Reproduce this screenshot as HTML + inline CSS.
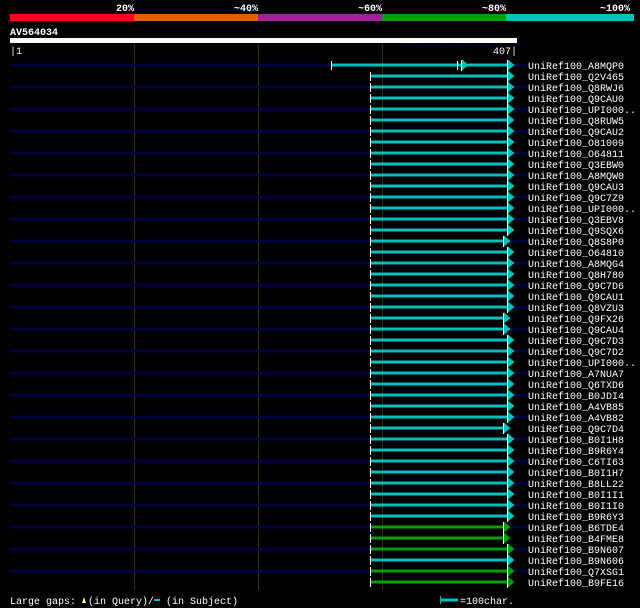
<!DOCTYPE html><html><head><style>html,body{margin:0;padding:0;background:#000;width:640px;height:608px;overflow:hidden}svg{display:block}text{font-family:"Liberation Mono",monospace;font-size:10px;fill:#fff}</style></head><body>
<svg width="640" height="608" viewBox="0 0 640 608" xmlns="http://www.w3.org/2000/svg">
<defs>
<g id="n"><line x1="10" y1="0" x2="528" y2="0" stroke="#000040" stroke-width="3"/></g>
<g id="cf"><line x1="371" y1="0" x2="508" y2="0" stroke="#00c0c0" stroke-width="3"/><line x1="370.5" y1="-4" x2="370.5" y2="5" stroke="#fff"/><polygon points="508,-5.5 514.5,0 508,5.5" fill="#00c0c0"/><line x1="507.5" y1="-5" x2="507.5" y2="6" stroke="#fff"/></g>
<g id="cs"><line x1="371" y1="0" x2="504" y2="0" stroke="#00c0c0" stroke-width="3"/><line x1="370.5" y1="-4" x2="370.5" y2="5" stroke="#fff"/><polygon points="504,-5.5 510.5,0 504,5.5" fill="#00c0c0"/><line x1="503.5" y1="-5" x2="503.5" y2="6" stroke="#fff"/></g>
<g id="gf"><line x1="371" y1="0" x2="508" y2="0" stroke="#00a000" stroke-width="3"/><line x1="370.5" y1="-4" x2="370.5" y2="5" stroke="#fff"/><polygon points="508,-5.5 514.5,0 508,5.5" fill="#00a000"/><line x1="507.5" y1="-5" x2="507.5" y2="6" stroke="#fff"/></g>
<g id="gs"><line x1="371" y1="0" x2="504" y2="0" stroke="#00a000" stroke-width="3"/><line x1="370.5" y1="-4" x2="370.5" y2="5" stroke="#fff"/><polygon points="504,-5.5 510.5,0 504,5.5" fill="#00a000"/><line x1="503.5" y1="-5" x2="503.5" y2="6" stroke="#fff"/></g>
</defs>
<g style="font-weight:bold"><text x="134" y="11" text-anchor="end">20%</text><text x="258" y="11" text-anchor="end">~40%</text><text x="382" y="11" text-anchor="end">~60%</text><text x="506" y="11" text-anchor="end">~80%</text><text x="630" y="11" text-anchor="end">~100%</text></g>
<rect x="10" y="14" width="124" height="7" fill="#ff0022"/><rect x="134" y="14" width="124" height="7" fill="#e06000"/><rect x="258" y="14" width="124" height="7" fill="#a020a0"/><rect x="382" y="14" width="124" height="7" fill="#00a000"/><rect x="506" y="14" width="128" height="7" fill="#00c0c0"/>
<text x="10" y="35" style="font-weight:bold">AV564034</text>
<text x="404" y="46" style="fill:#000050;font-size:9px">AlignView.pm Beta rel.7</text>
<rect x="10" y="38" width="507" height="5" fill="#fff"/>
<text x="10" y="54">|1</text><text x="517" y="54" text-anchor="end">407|</text>
<g stroke="#333300"><line x1="134.5" y1="44" x2="134.5" y2="590"/><line x1="258.5" y1="44" x2="258.5" y2="590"/><line x1="382.5" y1="44" x2="382.5" y2="590"/></g>
<use href="#n" y="65"/><use href="#n" y="87"/><use href="#n" y="109"/><use href="#n" y="131"/><use href="#n" y="153"/><use href="#n" y="175"/><use href="#n" y="197"/><use href="#n" y="219"/><use href="#n" y="241"/><use href="#n" y="263"/><use href="#n" y="285"/><use href="#n" y="307"/><use href="#n" y="329"/><use href="#n" y="351"/><use href="#n" y="373"/><use href="#n" y="395"/><use href="#n" y="417"/><use href="#n" y="439"/><use href="#n" y="461"/><use href="#n" y="483"/><use href="#n" y="505"/><use href="#n" y="527"/><use href="#n" y="549"/><use href="#n" y="571"/>
<g transform="translate(0,65)"><line x1="332" y1="0" x2="508" y2="0" stroke="#00c0c0" stroke-width="3"/><line x1="331.5" y1="-4" x2="331.5" y2="5" stroke="#fff"/><line x1="457.5" y1="-4" x2="457.5" y2="5" stroke="#fff"/><polygon points="462,-5.5 468.5,0 462,5.5" fill="#00c0c0"/><line x1="461.5" y1="-5" x2="461.5" y2="6" stroke="#fff"/><polygon points="508,-5.5 514.5,0 508,5.5" fill="#00c0c0"/><line x1="507.5" y1="-5" x2="507.5" y2="6" stroke="#fff"/></g>
<use href="#cf" y="76"/><use href="#cf" y="87"/><use href="#cf" y="98"/><use href="#cf" y="109"/><use href="#cf" y="120"/><use href="#cf" y="131"/><use href="#cf" y="142"/><use href="#cf" y="153"/><use href="#cf" y="164"/><use href="#cf" y="175"/><use href="#cf" y="186"/><use href="#cf" y="197"/><use href="#cf" y="208"/><use href="#cf" y="219"/><use href="#cf" y="230"/><use href="#cs" y="241"/><use href="#cf" y="252"/><use href="#cf" y="263"/><use href="#cf" y="274"/><use href="#cf" y="285"/><use href="#cf" y="296"/><use href="#cf" y="307"/><use href="#cs" y="318"/><use href="#cs" y="329"/><use href="#cf" y="340"/><use href="#cf" y="351"/><use href="#cf" y="362"/><use href="#cf" y="373"/><use href="#cf" y="384"/><use href="#cf" y="395"/><use href="#cf" y="406"/><use href="#cf" y="417"/><use href="#cs" y="428"/><use href="#cf" y="439"/><use href="#cf" y="450"/><use href="#cf" y="461"/><use href="#cf" y="472"/><use href="#cf" y="483"/><use href="#cf" y="494"/><use href="#cf" y="505"/><use href="#cf" y="516"/><use href="#gs" y="527"/><use href="#gs" y="538"/><use href="#gf" y="549"/><use href="#cf" y="560"/><use href="#gf" y="571"/><use href="#gf" y="582"/>
<g>
<text x="528" y="69">UniRef100_A8MQP0</text><text x="528" y="80">UniRef100_Q2V465</text><text x="528" y="91">UniRef100_Q8RWJ6</text><text x="528" y="102">UniRef100_Q9CAU0</text><text x="528" y="113">UniRef100_UPI000..</text><text x="528" y="124">UniRef100_Q8RUW5</text><text x="528" y="135">UniRef100_Q9CAU2</text><text x="528" y="146">UniRef100_O81009</text><text x="528" y="157">UniRef100_O64811</text><text x="528" y="168">UniRef100_Q3EBW0</text><text x="528" y="179">UniRef100_A8MQW0</text><text x="528" y="190">UniRef100_Q9CAU3</text><text x="528" y="201">UniRef100_Q9C7Z9</text><text x="528" y="212">UniRef100_UPI000..</text><text x="528" y="223">UniRef100_Q3EBV8</text><text x="528" y="234">UniRef100_Q9SQX6</text><text x="528" y="245">UniRef100_Q8S8P0</text><text x="528" y="256">UniRef100_O64810</text><text x="528" y="267">UniRef100_A8MQG4</text><text x="528" y="278">UniRef100_Q8H780</text><text x="528" y="289">UniRef100_Q9C7D6</text><text x="528" y="300">UniRef100_Q9CAU1</text><text x="528" y="311">UniRef100_Q8VZU3</text><text x="528" y="322">UniRef100_Q9FX26</text><text x="528" y="333">UniRef100_Q9CAU4</text><text x="528" y="344">UniRef100_Q9C7D3</text><text x="528" y="355">UniRef100_Q9C7D2</text><text x="528" y="366">UniRef100_UPI000..</text><text x="528" y="377">UniRef100_A7NUA7</text><text x="528" y="388">UniRef100_Q6TXD6</text><text x="528" y="399">UniRef100_B0JDI4</text><text x="528" y="410">UniRef100_A4VB85</text><text x="528" y="421">UniRef100_A4VB82</text><text x="528" y="432">UniRef100_Q9C7D4</text><text x="528" y="443">UniRef100_B0I1H8</text><text x="528" y="454">UniRef100_B9R6Y4</text><text x="528" y="465">UniRef100_C6TI63</text><text x="528" y="476">UniRef100_B0I1H7</text><text x="528" y="487">UniRef100_B8LL22</text><text x="528" y="498">UniRef100_B0I1I1</text><text x="528" y="509">UniRef100_B0I1I0</text><text x="528" y="520">UniRef100_B9R6Y3</text><text x="528" y="531">UniRef100_B6TDE4</text><text x="528" y="542">UniRef100_B4FME8</text><text x="528" y="553">UniRef100_B9N607</text><text x="528" y="564">UniRef100_B9N606</text><text x="528" y="575">UniRef100_Q7XSG1</text><text x="528" y="586">UniRef100_B9FE16</text>
</g>
<text x="10" y="604">Large gaps:</text><polygon points="82,603 84,597 86,603" fill="#ffff80"/><text x="88" y="604">(in Query)/</text><line x1="154" y1="600" x2="160" y2="600" stroke="#00c0c0" stroke-width="2"/><text x="166" y="604">(in Subject)</text>
<line x1="441" y1="600" x2="458" y2="600" stroke="#00c0c0" stroke-width="3"/><line x1="440.5" y1="596" x2="440.5" y2="604" stroke="#00c0c0"/><text x="460" y="604">=100char.</text>
</svg></body></html>
